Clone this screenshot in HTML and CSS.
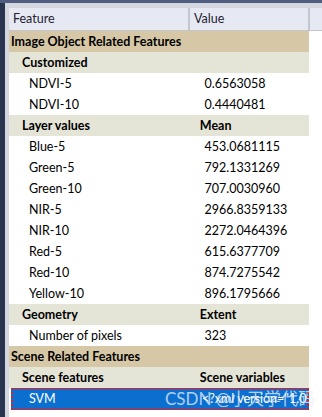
FILE: index.html
```html
<!DOCTYPE html>
<html lang="en">
<head>
    <meta charset="UTF-8">
    <title>Feature View</title>
    <link rel="stylesheet" href="styles.css">
</head>
<body>
    <div class="titlebar"></div>
    <div class="frame">
        <div class="edge"></div>
        <div class="gutter"></div>
        <div class="panel">
            <div class="head">
                <div class="hcell col-feature">Feature</div>
                <div class="hcell col-value">Value</div>
                <div class="hcell filler"></div>
            </div>

            <div class="row group"><div class="cell col-feature">Image Object Related Features</div><div class="cell col-value"></div></div>
            <div class="row sub"><div class="cell col-feature">Customized</div><div class="cell col-value"></div></div>
            <div class="row item"><div class="cell col-feature">NDVI-5</div><div class="cell col-value">0.6563058</div></div>
            <div class="row item"><div class="cell col-feature">NDVI-10</div><div class="cell col-value">0.4440481</div></div>
            <div class="row sub"><div class="cell col-feature">Layer values</div><div class="cell col-value">Mean</div></div>
            <div class="row item"><div class="cell col-feature">Blue-5</div><div class="cell col-value">453.0681115</div></div>
            <div class="row item"><div class="cell col-feature">Green-5</div><div class="cell col-value">792.1331269</div></div>
            <div class="row item"><div class="cell col-feature">Green-10</div><div class="cell col-value">707.0030960</div></div>
            <div class="row item"><div class="cell col-feature">NIR-5</div><div class="cell col-value">2966.8359133</div></div>
            <div class="row item"><div class="cell col-feature">NIR-10</div><div class="cell col-value">2272.0464396</div></div>
            <div class="row item"><div class="cell col-feature">Red-5</div><div class="cell col-value">615.6377709</div></div>
            <div class="row item"><div class="cell col-feature">Red-10</div><div class="cell col-value">874.7275542</div></div>
            <div class="row item"><div class="cell col-feature">Yellow-10</div><div class="cell col-value">896.1795666</div></div>
            <div class="row sub"><div class="cell col-feature">Geometry</div><div class="cell col-value">Extent</div></div>
            <div class="row item"><div class="cell col-feature">Number of pixels</div><div class="cell col-value">323</div></div>
            <div class="row group"><div class="cell col-feature">Scene Related Features</div><div class="cell col-value"></div></div>
            <div class="row sub"><div class="cell col-feature">Scene features</div><div class="cell col-value">Scene variables</div></div>
            <div class="row item selected"><div class="cell col-feature">SVM</div><div class="cell col-value">&lt;?xml version="1.0"?&gt;</div></div>

            <div class="watermark">CSDN @小天学代码</div>
        </div>
    </div>
</body>
</html>
```

FILE: styles.css
```css
html, body {
    margin: 0;
    height: 100%;
}
body {
    background-color: #fff;
    font-family: Lato, "Noto Sans CJK SC", sans-serif;
    font-size: 12.5px;
    color: #000;
    overflow: hidden;
}
.titlebar {
    height: 3px;
    background-color: #4e5d80;
}
.frame {
    display: flex;
    height: 414px;
}
.edge {
    width: 5px;
    background-color: #29344f;
}
.gutter {
    width: 4px;
    background-color: #d3d6de;
}
.panel {
    flex: 1;
    position: relative;
    border-top: 5px solid #d3d6de;
    background-color: #fff;
}
.head {
    display: flex;
    height: 22px;
    background-color: #e7e9f2;
    border-bottom: 1px solid #c3c6cf;
    color: #1e2233;
}
.hcell {
    box-sizing: border-box;
    height: 22px;
    line-height: 22px;
    border-right: 2px solid #c3c6cf;
}
.head .col-feature {
    width: 181px;
    padding-left: 4px;
}
.head .col-value {
    width: 120px;
    padding-left: 4px;
}
.head .filler {
    flex: 1;
    border-right: none;
}
.row {
    display: flex;
    width: 300px;
    height: 21px;
    line-height: 21px;
    box-sizing: border-box;
}
.cell {
    white-space: nowrap;
    overflow: hidden;
}
.row .col-feature {
    width: 180px;
}
.row .col-value {
    width: 120px;
}
.group {
    background-color: #d6c7a6;
    font-weight: bold;
}
.group .col-feature {
    padding-left: 2px;
    overflow: visible;
}
.sub {
    background-color: #e5e5d7;
    font-weight: bold;
}
.sub .col-feature {
    padding-left: 13px;
}
.sub .col-value {
    padding-left: 14px;
}
.item .col-feature {
    padding-left: 20px;
}
.item .col-value {
    padding-left: 19px;
}
.selected {
    margin-left: 2px;
    width: 298px;
    height: 22px;
    line-height: 18px;
    background-color: #0b6fcf;
    color: #fff;
    border: 2px dotted #f01818;
}
.selected .col-feature {
    width: 176px;
    padding-left: 16px;
}
.watermark {
    position: absolute;
    left: 156px;
    top: 377px;
    font-size: 17px;
    color: rgba(235, 240, 250, 0.75);
    white-space: nowrap;
}
```
